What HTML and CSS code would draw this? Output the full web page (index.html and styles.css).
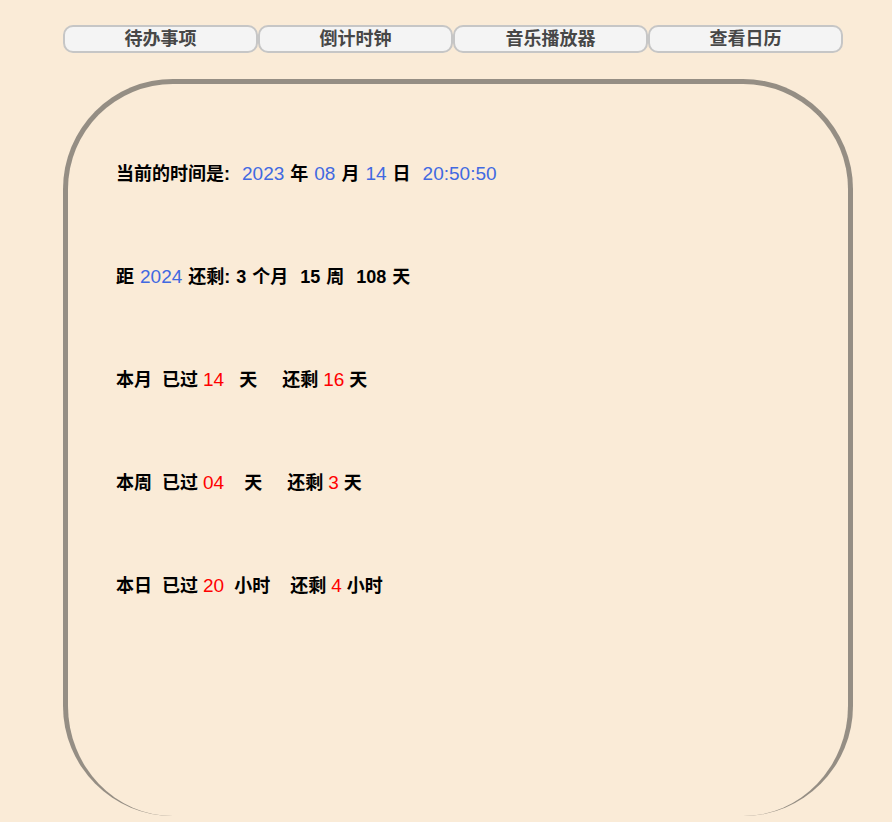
FILE: index.html
```html
<!DOCTYPE html>
<html lang="zh-CN">
<head>
<meta charset="utf-8">
<title>时间</title>
<link rel="stylesheet" href="styles.css">
</head>
<body>
<div class="wrap">
  <nav class="tabs">
    <button class="tab">待办事项</button>
    <button class="tab">倒计时钟</button>
    <button class="tab">音乐播放器</button>
    <button class="tab">查看日历</button>
  </nav>
  <section class="panel">
    <div class="row row-wide">当前的时间是:  <span class="blue">2023</span> 年 <span class="blue">08</span> 月 <span class="blue">14</span> 日  <span class="blue">20:50:50</span></div>
    <div class="row row-wide">距 <span class="blue">2024</span> 还剩: 3 个月  15 周  108 天</div>
    <div class="row">本月  已过 <span class="red">14</span>   天     还剩 <span class="red">16</span> 天</div>
    <div class="row">本周  已过 <span class="red">04</span>    天     还剩 <span class="red">3</span> 天</div>
    <div class="row">本日  已过 <span class="red">20</span>  小时    还剩 <span class="red">4</span> 小时</div>
  </section>
</div>
</body>
</html>
```
FILE: styles.css
```css
html, body {
  margin: 0;
  padding: 0;
}
body {
  background: #faebd7;
  font-family: "Liberation Sans", "Noto Sans CJK SC", sans-serif;
  padding: 8px;
  height: 822px;
  box-sizing: border-box;
  overflow: hidden;
}
.wrap {
  margin-left: 55px;
  padding-top: 17px;
  width: 790px;
}
.tabs {
  display: flex;
}
.tab {
  width: 195px;
  height: 28px;
  box-sizing: border-box;
  border: 2px solid #c6c6c6;
  border-radius: 10px;
  background: #f4f4f4;
  color: #474747;
  font-family: "Liberation Sans", "Noto Sans CJK SC", sans-serif;
  font-size: 18px;
  font-weight: bold;
  padding: 0;
  line-height: 22px;
}
.panel {
  margin-top: 26px;
  border: 5px solid #958e84;
  border-bottom: none;
  border-radius: 110px;
  padding: 78px 0 0 48px;
  height: 654px;
  width: 732px;
  display: flex;
  flex-direction: column;
  gap: 79px;
}
.row {
  font-size: 18px;
  font-weight: bold;
  line-height: 24px;
  white-space: pre;
  color: #000;
}
.row-wide {
  word-spacing: 1px;
}
.blue,
.red {
  font-size: 19px;
  font-weight: normal;
}
.blue {
  color: #4169e1;
}
.red {
  color: #ff0000;
}
```
